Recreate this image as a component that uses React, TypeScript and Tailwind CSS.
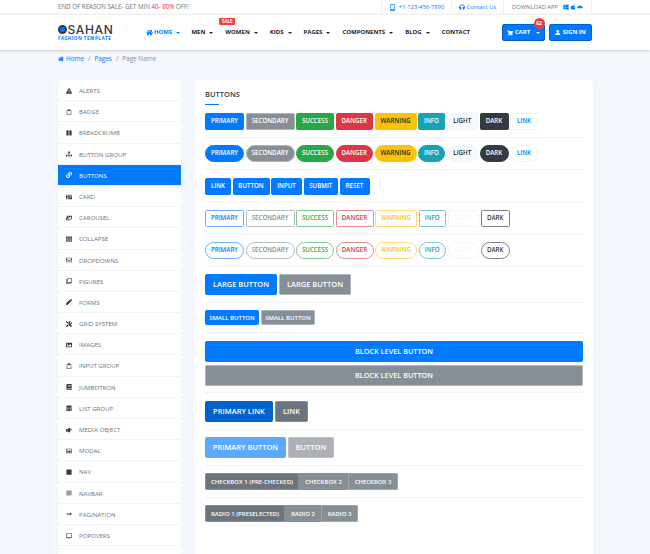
import React from 'react';
import { FaHome, FaMobileAlt, FaHeadphones, FaWindows, FaApple, FaAndroid, FaShoppingCart, FaUser, FaExclamationTriangle, FaRegClipboard, FaPause, FaSitemap, FaLink, FaIdCard, FaImages, FaTh, FaRegEnvelope, FaRegClone, FaPen, FaTools, FaImage, FaBook, FaCalendarAlt, FaHandPointRight, FaSquare, FaBars, FaLongArrowAltRight, FaRegCommentAlt, FaRegImage } from 'react-icons/fa';

const sideItems: [string, React.ComponentType<{ className?: string }>][] = [
  ['ALERTS', FaExclamationTriangle],
  ['BADGE', FaRegClipboard],
  ['BREADCRUMB', FaPause],
  ['BUTTON GROUP', FaSitemap],
  ['BUTTONS', FaLink],
  ['CARD', FaIdCard],
  ['CAROUSEL', FaImages],
  ['COLLAPSE', FaTh],
  ['DROPDOWNS', FaRegEnvelope],
  ['FIGURES', FaRegClone],
  ['FORMS', FaPen],
  ['GRID SYSTEM', FaTools],
  ['IMAGES', FaImage],
  ['INPUT GROUP', FaRegClipboard],
  ['JUMBOTRON', FaBook],
  ['LIST GROUP', FaCalendarAlt],
  ['MEDIA OBJECT', FaHandPointRight],
  ['MODAL', FaRegImage],
  ['NAV', FaSquare],
  ['NAVBAR', FaBars],
  ['PAGINATION', FaLongArrowAltRight],
  ['POPOVERS', FaRegCommentAlt],
  ['', FaSquare],
];

const nav: [string, boolean][] = [['MEN', true], ['WOMEN', true], ['KIDS', true], ['PAGES', true], ['COMPONENTS', true], ['BLOG', true], ['CONTACT', false]];

const Caret = () => <span className="inline-block ml-[4px] border-x-[2px] border-t-[2px] border-x-transparent border-t-current align-middle" />;

const solid = [
  ['PRIMARY', 'bg-[#007bff] border-[#007bff] text-white', 'w-[39px]'],
  ['SECONDARY', 'bg-[#868e96] border-[#adb5bd] text-white', 'w-[49px]'],
  ['SUCCESS', 'bg-[#28a745] border-[#28a745] text-white', 'w-[38px]'],
  ['DANGER', 'bg-[#dc3545] border-[#dc3545] text-white', 'w-[37.5px]'],
  ['WARNING', 'bg-[#ffc107] border-[#ffc107] text-[#212529]', 'w-[42px]'],
  ['INFO', 'bg-[#17a2b8] border-[#17a2b8] text-white', 'w-[27px]'],
  ['LIGHT', 'bg-[#f8f9fa] border-[#f1f3f8] text-[#212529]', 'w-[31.5px]'],
  ['DARK', 'bg-[#343a40] border-[#343a40] text-white', 'w-[29px]'],
  ['LINK', 'bg-white border-[#eef2fb] text-[#007bff]', 'w-[28px]'],
];

const outline = [
  ['PRIMARY', 'border-[#66b0ff] text-[#007bff]', 'w-[39px]'],
  ['SECONDARY', 'border-[#b6bbc0] text-[#868e96]', 'w-[49px]'],
  ['SUCCESS', 'border-[#7ecb90] text-[#28a745]', 'w-[38px]'],
  ['DANGER', 'border-[#ea8791] text-[#dc3545]', 'w-[38px]'],
  ['WARNING', 'border-[#ffdb70] text-[#ffc107]', 'w-[42px]'],
  ['INFO', 'border-[#74c7d4] text-[#17a2b8]', 'w-[27.5px]'],
  ['LIGHT', 'border-[#f1f3f8] text-[#f4f5f7]', 'w-[31.5px]'],
  ['DARK', 'border-[#7d8185] text-[#343a40]', 'w-[29.5px]'],
];

const Divider = ({ className }: { className: string }) => <div className={`h-px bg-[#eff1f5] ${className}`} />;

const Btn = ({ label, className }: { label: string; className: string }) => (
  <span className={`flex items-center justify-center border whitespace-nowrap font-semibold ${className}`}>{label}</span>
);

export default function App() {
  return (
    <div className="h-[554px] w-[650px] overflow-hidden bg-[#f4f7fd] text-[#343a40] font-['Open_Sans',sans-serif]">
      {/* top bar */}
      <div className="h-[14px] bg-white">
        <div className="ml-[58px] w-[534px] h-full flex items-center justify-between text-[6.2px] text-[#6c757d]">
          <span className="font-medium">END OF REASON SALE- GET MIN <span className="text-[#dc3545]">40- 80%</span> OFF!</span>
          <div className="flex h-full items-center text-[5.8px]">
            <span className="h-full w-[71px] flex items-center justify-center gap-[3px] border-x border-[#eef0f4] text-[#007bff]"><FaMobileAlt className="text-[7px]" />+1-123-456-7890</span>
            <span className="h-full w-[51px] flex items-center justify-center gap-[2px] text-[#007bff]"><FaHeadphones className="text-[6px]" />Contact Us</span>
            <span className="h-full w-[89px] flex items-center justify-center gap-[5px] border-x border-[#eef0f4]">DOWNLOAD APP <span className="flex gap-[1px] text-[#007bff] text-[6px]"><FaWindows /><FaApple /><FaAndroid /></span></span>
          </div>
        </div>
      </div>
      {/* header */}
      <div className="h-[36px] bg-white border-t border-[#eef0f4] shadow-[0_1px_3px_rgba(0,0,0,0.18)]">
        <div className="ml-[58px] w-[534px] h-full flex items-center">
          <div className="w-[88px] shrink-0">
            <div className="flex items-center h-[11px] font-['Inter',sans-serif] text-[12px] font-medium tracking-[0.65px] text-[#343a40] leading-none">
              <span className="w-[9px] h-[9px] rounded-full border-[2px] border-[#343a40] bg-[#007bff] mr-[0.5px]" />SAHAN
            </div>
            <div className="text-[4.6px] font-bold tracking-[0.5px] text-[#007bff] leading-[6px]">FASHION TEMPLATE</div>
          </div>
          <div className="flex items-center text-[6px] font-bold text-[#212529]">
            <span className="flex items-center text-[#007bff] mr-[11px]"><FaHome className="text-[7px] mr-[1px]" />HOME<Caret /></span>
            {nav.map(([n, c]) => (
              <span key={n} className="relative flex items-center mr-[12px]">
                {n === 'WOMEN' && <span className="absolute left-[-6px] top-[-10px] w-[16px] h-[7px] bg-[#ff3b3b] text-white text-[4.5px] rounded-[1px] flex items-center justify-center">SALE</span>}
                {n}{c && <Caret />}
              </span>
            ))}
          </div>
          <div className="ml-auto flex items-center gap-[4px] text-[6px] font-bold text-white">
            <span className="relative w-[43px] h-[17px] rounded-[2px] bg-[#007bff] border border-[#0062cc] flex items-center justify-center gap-[2px]">
              <FaShoppingCart className="text-[6px]" />CART<Caret />
              <span className="absolute right-[-0.5px] top-[-7px] w-[11px] h-[11px] rounded-full bg-[#f03e3e] text-[5px] flex items-center justify-center">02</span>
            </span>
            <span className="w-[43px] h-[17px] rounded-[2px] bg-[#007bff] border border-[#0062cc] flex items-center justify-center gap-[2px]"><FaUser className="text-[5.5px]" />SIGN IN</span>
          </div>
        </div>
      </div>
      {/* breadcrumb */}
      <div className="ml-[58px] h-[18px] mb-[12px] flex items-center text-[6.4px] text-[#868e96] gap-[4px]">
        <FaHome className="text-[#007bff] text-[6px]" /><span className="text-[#007bff] -ml-[2px]">Home</span><span>/</span><span className="text-[#007bff]">Pages</span><span>/</span><span>Page Name</span>
      </div>
      <div className="ml-[58px] w-[535px] flex items-start gap-[14px]">
        {/* sidebar */}
        <div className="w-[123px] shrink-0 rounded-t-[2px] bg-white shadow-[0_0_2px_rgba(0,0,0,0.06)]">
          {sideItems.map(([label, Icon], i) => (
            <div key={i} className={`h-[21.2px] flex items-center border-b border-[#f0f2f6] pl-[8px] pt-[1px] text-[6.1px] ${label === 'BUTTONS' ? 'bg-[#007bff] text-white' : 'text-[#6c757d]'}`}>
              <span className={`w-[13px] text-[6px] ${label === 'BUTTONS' ? '' : 'text-[#343a40]'}`}>{label && <Icon />}</span>{label}
            </div>
          ))}
        </div>
        {/* main */}
        <div className="w-[398px] h-[480px] shrink-0 rounded-t-[2px] bg-white px-[10px] shadow-[0_0_2px_rgba(0,0,0,0.06)] text-[6.2px] leading-none">
          <div className="pt-[10px] text-[7.5px] font-semibold leading-[9px]">BUTTONS</div>
          <div className="mt-[5px] w-[14px] h-[1px] bg-[#007bff]" />
          <div className="mt-[8px] flex gap-[1.5px]">
            {solid.map(([l, c, w]) => <Btn key={l} label={l} className={`h-[17px] rounded-[1.5px] ${c} ${w}`} />)}
          </div>
          <Divider className="mt-[7px]" />
          <div className="mt-[7px] flex gap-[1.5px]">
            {solid.map(([l, c, w]) => <Btn key={l} label={l} className={`h-[17px] rounded-full ${c} ${w}`} />)}
          </div>
          <Divider className="mt-[7px]" />
          <div className="mt-[8px] flex gap-[1.5px]">
            {[['LINK', 'w-[26px]'], ['BUTTON', 'w-[37px]'], ['INPUT', 'w-[31px]'], ['SUBMIT', 'w-[34.5px]'], ['RESET', 'w-[30px]']].map(([l, w]) => <Btn key={l} label={l} className={`h-[17px] rounded-[1.5px] bg-[#007bff] border-[#007bff] text-white ${w}`} />)}
          </div>
          <Divider className="mt-[7px]" />
          <div className="mt-[7px] flex gap-[1.5px]">
            {outline.map(([l, c, w]) => <Btn key={l} label={l} className={`h-[17px] rounded-[1.5px] ${c} ${w}`} />)}
          </div>
          <Divider className="mt-[7px]" />
          <div className="mt-[7px] flex gap-[1.5px]">
            {outline.map(([l, c, w]) => <Btn key={l} label={l} className={`h-[17px] rounded-full ${c} ${w}`} />)}
          </div>
          <Divider className="mt-[7px]" />
          <div className="mt-[7px] flex gap-[2px] text-[7.5px]">
            <Btn label="LARGE BUTTON" className="w-[72px] h-[21px] rounded-[1.5px] bg-[#007bff] border-[#007bff] text-white" />
            <Btn label="LARGE BUTTON" className="w-[72px] h-[21px] rounded-[1.5px] bg-[#868e96] border-[#adb5bd] text-white" />
          </div>
          <Divider className="mt-[7px]" />
          <div className="mt-[7px] flex gap-[2px] text-[6px]">
            <Btn label="SMALL BUTTON" className="w-[54px] h-[15px] rounded-[1.5px] bg-[#007bff] border-[#007bff] text-white" />
            <Btn label="SMALL BUTTON" className="w-[54px] h-[15px] rounded-[1.5px] bg-[#868e96] border-[#adb5bd] text-white" />
          </div>
          <Divider className="mt-[7px]" />
          <div className="mt-[8px] flex flex-col gap-[3px] text-[7.3px]">
            <Btn label="BLOCK LEVEL BUTTON" className="h-[21px] rounded-[1.5px] bg-[#007bff] border-[#007bff] text-white" />
            <Btn label="BLOCK LEVEL BUTTON" className="h-[21px] rounded-[1.5px] bg-[#868e96] border-[#adb5bd] text-white" />
          </div>
          <Divider className="mt-[6px]" />
          <div className="mt-[8px] flex gap-[2px] text-[7.5px]">
            <Btn label="PRIMARY LINK" className="w-[68px] h-[21px] rounded-[1.5px] bg-[#0062cc] border-[#0062cc] text-white" />
            <Btn label="LINK" className="w-[33px] h-[21px] rounded-[1.5px] bg-[#6c757d] border-[#868e96] text-white" />
          </div>
          <Divider className="mt-[7px]" />
          <div className="mt-[7px] flex gap-[2px] text-[7.5px]">
            <Btn label="PRIMARY BUTTON" className="w-[81px] h-[21px] rounded-[1.5px] bg-[#5ca9ff] border-[#5ca9ff] text-white" />
            <Btn label="BUTTON" className="w-[46px] h-[21px] rounded-[1.5px] bg-[#adb1b6] border-[#bdc1c5] text-white" />
          </div>
          <Divider className="mt-[7px]" />
          <div className="mt-[7px] flex text-[6px] text-white">
            <Btn label="CHECKBOX 1 (PRE-CHECKED)" className="w-[94px] h-[17px] rounded-l-[1.5px] bg-[#6c757d] border-[#868e96]" />
            <Btn label="CHECKBOX 2" className="w-[49px] h-[17px] bg-[#868e96] border-[#868e96]" />
            <Btn label="CHECKBOX 3" className="w-[50px] h-[17px] rounded-r-[1.5px] bg-[#868e96] border-[#a0a6ab]" />
          </div>
          <Divider className="mt-[7px]" />
          <div className="mt-[7px] flex text-[6px] text-white">
            <Btn label="RADIO 1 (PRESELECTED)" className="w-[80px] h-[17px] rounded-l-[1.5px] bg-[#6c757d] border-[#868e96]" />
            <Btn label="RADIO 2" className="w-[36px] h-[17px] bg-[#868e96] border-[#868e96]" />
            <Btn label="RADIO 3" className="w-[37px] h-[17px] rounded-r-[1.5px] bg-[#868e96] border-[#a0a6ab]" />
          </div>
        </div>
      </div>
    </div>
  );
}
